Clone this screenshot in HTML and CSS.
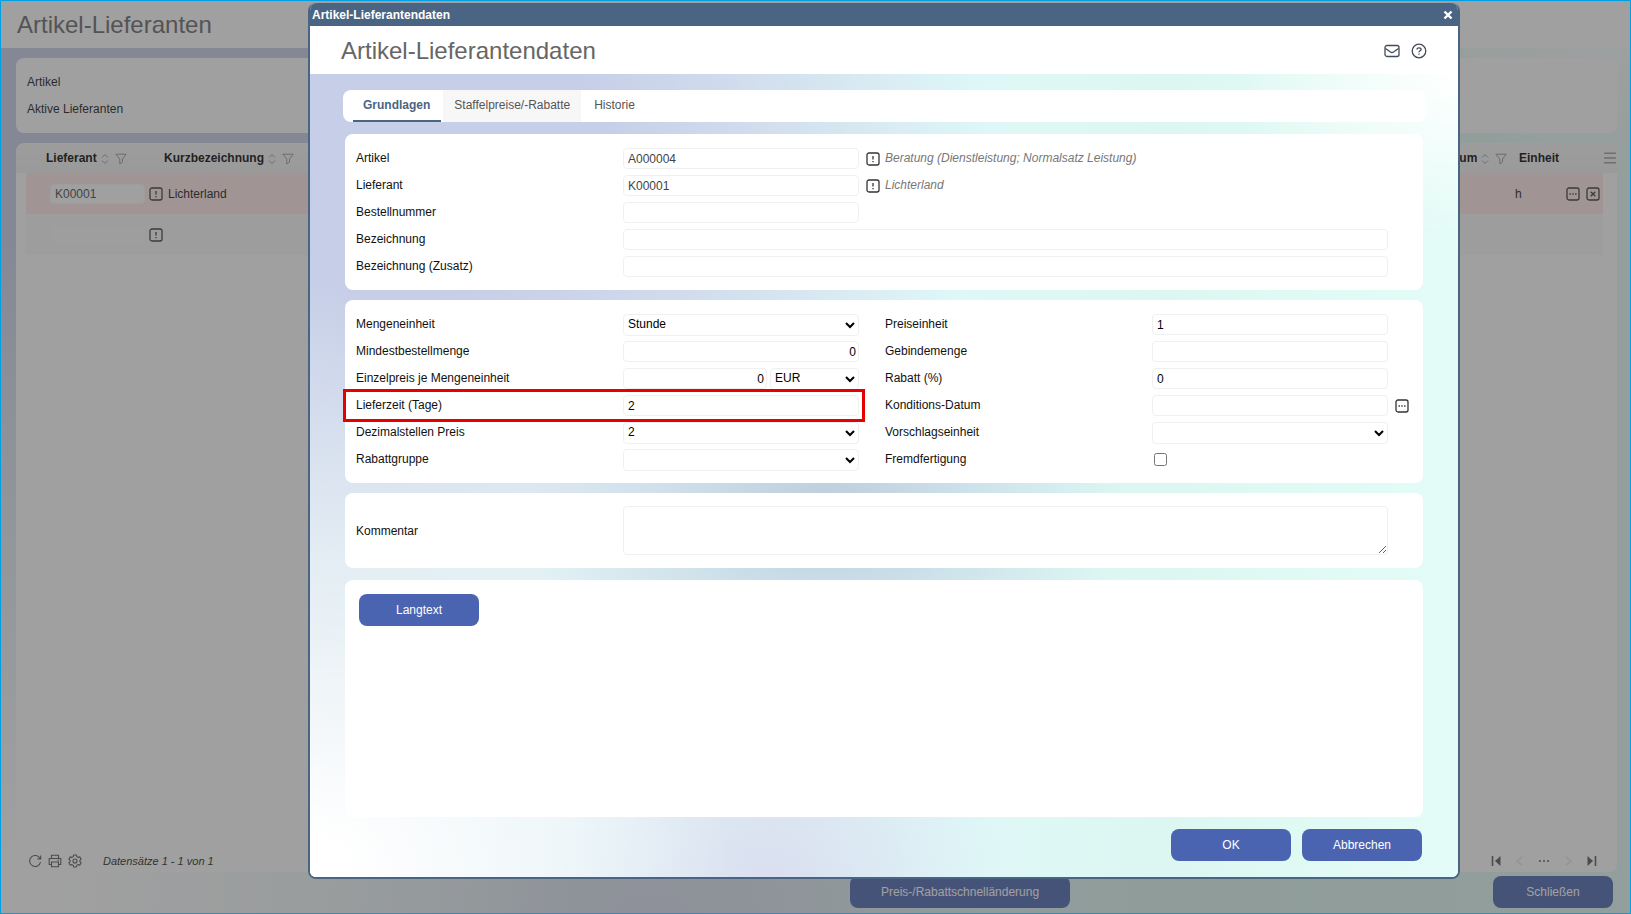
FILE: index.html
```html
<!DOCTYPE html>
<html lang="de">
<head>
    <meta charset="UTF-8">
    <meta name="viewport" content="width=device-width, initial-scale=1.0">
    <title>Artikel-Lieferanten</title>
    <link rel="stylesheet" href="styles.css">
</head>
<body>
    <!-- Icon set -->
    <svg class="sprite" aria-hidden="true">
        <symbol id="i-info" viewBox="0 0 14 14"><rect x="1" y="1" width="12" height="12" rx="2"/><path d="M7 4v3.5M7 9v1.2"/></symbol>
        <symbol id="i-dots" viewBox="0 0 14 14"><rect x="1" y="1" width="12" height="12" rx="2"/><path d="M3.5 7h1.4M6.3 7h1.4M9.1 7h1.4"/></symbol>
        <symbol id="i-del" viewBox="0 0 14 14"><rect x="1" y="1" width="12" height="12" rx="2"/><path d="M4.7 4.7l4.6 4.6M9.3 4.7L4.7 9.3"/></symbol>
        <symbol id="i-sort" viewBox="0 0 8 12"><path d="M1 4.5L4 1.5l3 3M1 7.5l3 3 3-3"/></symbol>
        <symbol id="i-filter" viewBox="0 0 12 12"><path d="M.8 1.2h10.4L7.5 6v3L4.800 11V6z"/></symbol>
        <symbol id="i-mail" viewBox="0 0 16 14"><rect x="1" y="1.5" width="14" height="11" rx="2"/><path d="M1.500 4.500L6.500 8q1.500 1 3 0l5-3.500"/></symbol>
        <symbol id="i-help" viewBox="0 0 16 16"><circle cx="8" cy="8" r="6.800"/><path d="M6 6.600C6 5.300 6.800 4.800 8 4.800s2.100.7 2.100 1.700C10.100 7.700 8 7.800 8 9.200M8 10.500v1.300"/></symbol>
        <symbol id="i-reload" viewBox="0 0 14 14"><path d="M12 4.500A5.500 5.500 0 1 0 12.500 8M12.700 1.500v3.500H9.200"/></symbol>
        <symbol id="i-print" viewBox="0 0 14 14"><path d="M3.500 4.500V1.200h7v3.300M3.500 10.500H1.200v-6h11.600v6h-2.300M3.500 8h7v4.800h-7zM9.500 6.300h1.500"/></symbol>
        <symbol id="i-gear" viewBox="0 0 14 14"><path d="M5.700 1h2.600l.5 1.700 1.300.7 1.700-.5 1.300 2.300L11.900 6.500v1l1.200 1.300-1.300 2.300-1.700-.5-1.300.7L8.300 13H5.700l-.5-1.700-1.300-.7-1.700.5L.9 8.800l1.200-1.300v-1L.9 5.200l1.300-2.300 1.700.5 1.300-.7z"/><circle cx="7" cy="7" r="2"/></symbol>
        <symbol id="i-menu" viewBox="0 0 12 12"><path d="M1 2h10M1 6h10M1 10h10"/></symbol>
        <symbol id="i-first" viewBox="0 0 10 10"><path d="M1.500 0v10"/><path class="solid" d="M9.500 0v10L4 5z"/></symbol>
        <symbol id="i-last" viewBox="0 0 10 10"><path d="M8.500 0v10"/><path class="solid" d="M.5 0v10L6 5z"/></symbol>
        <symbol id="i-prev" viewBox="0 0 10 10"><path d="M7 1L2 5l5 4"/></symbol>
        <symbol id="i-next" viewBox="0 0 10 10"><path d="M3 1l5 4-5 4"/></symbol>
        <symbol id="i-more" viewBox="0 0 10 10"><path d="M0 5h2M4 5h2M8 5h2"/></symbol>
    </svg>

    <div class="page backdrop">
        <header class="page-header"><h1>Artikel-Lieferanten</h1></header>
        <main class="page-main">
            <section class="box summary">
                <div>Artikel</div>
                <div>Aktive Lieferanten</div>
            </section>
            <section class="box list">
                <div class="list-top">
                    <table class="suppliers">
                        <colgroup>
                            <col class="c-supplier"><col class="c-name"><col><col class="c-date"><col class="c-unit"><col class="c-actions">
                        </colgroup>
                        <thead>
                            <tr>
                                <th>Lieferant<svg class="sort"><use href="#i-sort"/></svg><svg class="filter"><use href="#i-filter"/></svg></th>
                                <th>Kurzbezeichnung<svg class="sort"><use href="#i-sort"/></svg><svg class="filter"><use href="#i-filter"/></svg></th>
                                <th></th>
                                <th>Datum<svg class="sort"><use href="#i-sort"/></svg><svg class="filter"><use href="#i-filter"/></svg></th>
                                <th class="unit">Einheit</th>
                                <th></th>
                            </tr>
                        </thead>
                        <tbody>
                            <tr class="selected">
                                <td><div class="cell"><input type="text" value="K00001" aria-label="Lieferant"><button class="icon-btn" type="button" aria-label="Info"><svg><use href="#i-info"/></svg></button></div></td>
                                <td>Lichterland</td>
                                <td></td>
                                <td></td>
                                <td class="unit">h</td>
                                <td><div class="cell actions"><button class="icon-btn" type="button" aria-label="Details"><svg><use href="#i-dots"/></svg></button><button class="icon-btn" type="button" aria-label="Entfernen"><svg><use href="#i-del"/></svg></button></div></td>
                            </tr>
                            <tr class="new">
                                <td><div class="cell"><input type="text" aria-label="Neuer Lieferant"><button class="icon-btn" type="button" aria-label="Info"><svg><use href="#i-info"/></svg></button></div></td>
                                <td></td><td></td><td></td><td></td><td></td>
                            </tr>
                        </tbody>
                    </table>
                    <button class="icon-btn menu" type="button" aria-label="Spalten"><svg><use href="#i-menu"/></svg></button>
                </div>
                <div class="list-footer">
                    <button class="icon-btn" type="button" aria-label="Aktualisieren"><svg><use href="#i-reload"/></svg></button>
                    <button class="icon-btn" type="button" aria-label="Drucken"><svg><use href="#i-print"/></svg></button>
                    <button class="icon-btn" type="button" aria-label="Einstellungen"><svg><use href="#i-gear"/></svg></button>
                    <span class="count">Datensätze 1 - 1 von 1</span>
                    <div class="pager">
                        <button class="icon-btn" type="button" aria-label="Erste Seite"><svg><use href="#i-first"/></svg></button>
                        <button class="icon-btn" type="button" aria-label="Zurück" disabled><svg><use href="#i-prev"/></svg></button>
                        <button class="icon-btn" type="button" aria-label="Seiten"><svg><use href="#i-more"/></svg></button>
                        <button class="icon-btn" type="button" aria-label="Weiter" disabled><svg><use href="#i-next"/></svg></button>
                        <button class="icon-btn" type="button" aria-label="Letzte Seite"><svg><use href="#i-last"/></svg></button>
                    </div>
                </div>
            </section>
        </main>
        <footer class="page-footer">
            <button class="btn wide" type="button">Preis-/Rabattschnelländerung</button>
            <button class="btn" type="button">Schließen</button>
        </footer>
        <div class="overlay"></div>
    </div>

    <div class="dialog" role="dialog" aria-labelledby="dialog-title">
        <div class="dialog-bar">
            <span id="dialog-title">Artikel-Lieferantendaten</span>
            <button class="close" type="button" aria-label="Fenster schließen"><svg viewBox="0 0 10 10"><path d="M1.500 1.500l7 7M8.500 1.500l-7 7"/></svg></button>
        </div>
        <div class="dialog-header">
            <h2>Artikel-Lieferantendaten</h2>
            <button class="icon-btn large" type="button" aria-label="E-Mail"><svg><use href="#i-mail"/></svg></button>
            <button class="icon-btn large" type="button" aria-label="Hilfe"><svg><use href="#i-help"/></svg></button>
        </div>
        <form class="dialog-body backdrop">
            <nav class="tabs">
                <a class="tab active" href="#">Grundlagen</a>
                <a class="tab shaded" href="#">Staffelpreise/-Rabatte</a>
                <a class="tab" href="#">Historie</a>
            </nav>
            <div class="panels">
                <section class="box panel">
                    <div class="fields">
                        <div class="field"><label for="artikel">Artikel</label><input id="artikel" class="readonly" type="text" value="A000004"><span class="slot"><button class="icon-btn" type="button" aria-label="Info Artikel"><svg><use href="#i-info"/></svg></button></span></div>
                        <div class="hint">Beratung (Dienstleistung; Normalsatz Leistung)</div>
                        <div class="field"><label for="lieferant">Lieferant</label><input id="lieferant" class="readonly" type="text" value="K00001"><span class="slot"><button class="icon-btn" type="button" aria-label="Info Lieferant"><svg><use href="#i-info"/></svg></button></span></div>
                        <div class="hint">Lichterland</div>
                        <div class="field"><label for="bestellnummer">Bestellnummer</label><input id="bestellnummer" type="text"><span class="slot"></span></div>
                        <div></div>
                        <div class="field full"><label for="bezeichnung">Bezeichnung</label><input id="bezeichnung" type="text"><span class="slot"></span></div>
                        <div class="field full"><label for="zusatz">Bezeichnung (Zusatz)</label><input id="zusatz" type="text"><span class="slot"></span></div>
                    </div>
                </section>

                <section class="box panel">
                    <div class="fields">
                        <div class="field"><label for="einheit">Mengeneinheit</label><select id="einheit"><option>Stunde</option></select><span class="slot"></span></div>
                        <div class="field"><label for="preiseinheit">Preiseinheit</label><input id="preiseinheit" type="text" value="1"><span class="slot"></span></div>
                        <div class="field"><label for="mindest">Mindestbestellmenge</label><input id="mindest" class="number" type="text" value="0"><span class="slot"></span></div>
                        <div class="field"><label for="gebinde">Gebindemenge</label><input id="gebinde" type="text"><span class="slot"></span></div>
                        <div class="field"><label for="preis">Einzelpreis je Mengeneinheit</label><input id="preis" class="number" type="text" value="0"><select class="currency" aria-label="Währung"><option>EUR</option></select><span class="slot"></span></div>
                        <div class="field"><label for="rabatt">Rabatt (%)</label><input id="rabatt" type="text" value="0"><span class="slot"></span></div>
                        <div class="field marked"><label for="lieferzeit">Lieferzeit (Tage)</label><input id="lieferzeit" type="text" value="2"><span class="slot"></span></div>
                        <div class="field"><label for="datum">Konditions-Datum</label><input id="datum" type="text"><span class="slot"><button class="icon-btn" type="button" aria-label="Datum wählen"><svg><use href="#i-dots"/></svg></button></span></div>
                        <div class="field"><label for="dezimal">Dezimalstellen Preis</label><select id="dezimal"><option>2</option></select><span class="slot"></span></div>
                        <div class="field"><label for="vorschlag">Vorschlagseinheit</label><select id="vorschlag"><option></option></select><span class="slot"></span></div>
                        <div class="field"><label for="gruppe">Rabattgruppe</label><select id="gruppe"><option></option></select><span class="slot"></span></div>
                        <div class="field"><label for="fremd">Fremdfertigung</label><input id="fremd" type="checkbox"></div>
                    </div>
                </section>

                <section class="box panel comment">
                    <div class="field"><label for="kommentar">Kommentar</label><textarea id="kommentar"></textarea><span class="slot"></span></div>
                </section>

                <section class="box panel longtext">
                    <button class="btn" type="button">Langtext</button>
                </section>
            </div>
            <div class="dialog-actions">
                <button class="btn" type="submit">OK</button>
                <button class="btn" type="button">Abbrechen</button>
            </div>
        </form>
    </div>
</body>
</html>
```

FILE: styles.css
```css
* {
    box-sizing: border-box;
}
body {
    margin: 0;
    font-family: "Liberation Sans", Arial, sans-serif;
    font-size: 12px;
    line-height: 16px;
    color: #111;
}
h1, h2 {
    margin: 0;
    font-size: 24px;
    line-height: 32px;
    font-weight: normal;
    color: #666;
}
input, select, textarea, button {
    font: inherit;
    color: #000;
}
svg {
    fill: none;
    stroke: currentColor;
}
.solid {
    fill: currentColor;
    stroke: none;
}
.sprite {
    display: none;
}
.backdrop {
    background:
        radial-gradient(ellipse at 100% 0%, #ffffff 0%, rgba(255, 255, 255, 0) 14%),
        radial-gradient(ellipse at 0% 98%, #ffffff 2%, rgba(255, 255, 255, 0) 26%),
        radial-gradient(ellipse at 40% 102%, #dae0f0 2%, rgba(218, 224, 240, 0) 24%),
        radial-gradient(ellipse at 8% 10%, #c7cfe8 14%, rgba(199, 207, 232, 0) 40%),
        radial-gradient(ellipse at 45% 54%, #bccddd 0%, rgba(192, 211, 224, 0) 34%),
        linear-gradient(to right, #e4edf3 0%, #dff8f8 55%, #dcf7f1 75%, #e4fcf7 100%);
}
.box {
    background: #fff;
    border-radius: 8px;
}
.btn {
    width: 120px;
    height: 32px;
    padding: 0;
    border: none;
    border-radius: 8px;
    background: #4b64b1;
    color: #fff;
    cursor: pointer;
}
.btn.wide {
    width: 220px;
}
.icon-btn {
    display: flex;
    padding: 0;
    border: none;
    background: none;
    color: #333;
    cursor: pointer;
}
.icon-btn svg {
    width: 14px;
    height: 14px;
    stroke-width: 1.3;
}

/* Supplier list */
.page {
    position: relative;
    display: flex;
    flex-direction: column;
    height: 100vh;
    border: 1px solid #009fe3;
}
.page-header {
    padding: 8px 16px 7px;
    background: #fff;
}
.page-main {
    flex: 1;
    display: flex;
    flex-direction: column;
    gap: 10px;
    padding: 10px 13px 0 15px;
}
.summary {
    padding: 11px 11px 10px;
    line-height: 27px;
}
.list {
    flex: 1;
    display: flex;
    flex-direction: column;
    justify-content: space-between;
    overflow: hidden;
    background: linear-gradient(#f8f8f8 0, #f2f2f2 30px, #fff 30px);
}
.list-top {
    display: flex;
    padding-left: 10px;
}
.suppliers {
    flex: 1;
    table-layout: fixed;
    width: 100%;
    border-collapse: collapse;
}
.c-supplier { width: 138px; }
.c-name { width: 150px; }
.c-date { width: 75px; }
.c-unit { width: 46px; }
.c-actions { width: 42px; }
.suppliers th {
    height: 30px;
    padding: 0;
    text-align: left;
    white-space: nowrap;
    color: #000;
}
.suppliers th:first-child {
    padding-left: 20px;
}
.suppliers td {
    height: 41px;
    padding: 0 0 0 4px;
}
.suppliers td:first-child {
    padding-left: 24px;
}
.suppliers th.unit {
    padding-left: 4px;
}
.suppliers td.unit,
.suppliers td:last-child {
    padding-left: 0;
}
.sort, .filter {
    height: 12px;
    margin-left: 4px;
    vertical-align: -3px;
    color: #999;
}
.sort {
    width: 8px;
}
.filter {
    width: 12px;
    margin-left: 6px;
}
.selected {
    background: #ffe9e6;
}
.new {
    background: #f8f8fb;
}
.cell {
    display: flex;
    align-items: center;
    gap: 4px;
}
.cell input {
    width: 95px;
    height: 20px;
    padding: 0 4px;
    border: 1px solid #f8f8f8;
    border-radius: 4px;
    background: #fff;
    color: #444;
}
.new input {
    background: #fbfbfd;
}
.actions {
    gap: 6px;
    padding-left: 5px;
}
.menu {
    align-self: flex-start;
    padding-top: 8px;
    color: #999;
}
.list-footer {
    display: flex;
    align-items: center;
    gap: 6px;
    padding: 0 20px 3px 12px;
}
.list-footer .icon-btn {
    color: #555;
}
.list-footer svg {
    stroke-width: 1.1;
}
.count {
    margin-left: 15px;
    font-size: 11px;
    font-style: italic;
    color: #222;
}
.pager {
    display: flex;
    gap: 14px;
    margin-left: auto;
}
.pager svg {
    width: 10px;
    height: 10px;
    stroke-width: 1.6;
}
.list-footer .icon-btn:disabled {
    color: #e4e4e4;
}
.page-footer {
    display: flex;
    justify-content: space-between;
    margin-left: 52%;
    padding: 4px 17px 5px 2px;
}
.overlay {
    position: absolute;
    inset: 0;
    background: rgba(66, 66, 66, 0.5);
}

/* Dialog */
.dialog {
    position: absolute;
    top: 3px;
    right: 171px;
    bottom: 35px;
    left: 308px;
    display: flex;
    flex-direction: column;
    overflow: hidden;
    border: 2px solid #4a6583;
    border-top: none;
    border-radius: 8px;
    background: #fff;
}
.dialog-bar {
    display: flex;
    align-items: center;
    justify-content: space-between;
    height: 23px;
    padding: 0 5px 0 2px;
    background: #4a6583;
    color: #fff;
    font-weight: bold;
}
.close {
    display: flex;
    padding: 1px 0 0;
    border: none;
    background: none;
    color: #fff;
}
.close svg {
    width: 10px;
    height: 10px;
    stroke-width: 2.4;
}
.dialog-header {
    display: flex;
    align-items: center;
    gap: 11px;
    height: 48px;
    padding: 2px 31px 0;
}
.dialog-header h2 {
    flex: 1;
}
.large {
    color: #434a5c;
}
.large svg {
    width: 16px;
    height: 16px;
}
.dialog-body {
    flex: 1;
    display: flex;
    flex-direction: column;
    padding: 16px 32px 16px 33px;
}
.tabs {
    display: flex;
    height: 32px;
    padding-left: 10px;
    border-radius: 8px;
    background: #fff;
}
.tab {
    padding: 7px 13px;
    color: #555;
    text-decoration: none;
}
.tab.active {
    margin-right: 2px;
    padding: 7px 11px 7px 10px;
    border-bottom: 2px solid #4a6583;
    color: #4a6583;
    font-weight: bold;
}
.tab.shaded {
    padding: 7px 11px;
    background: #f7f7f7;
}
.panels {
    flex: 1;
    display: flex;
    flex-direction: column;
    gap: 10px;
    padding: 12px 3px 12px 2px;
}
.panel {
    padding: 11px 9px 10px 11px;
}
.fields {
    display: grid;
    grid-template-columns: repeat(2, minmax(0, 1fr));
    grid-auto-rows: 27px;
    align-items: center;
}
.field {
    position: relative;
    display: flex;
    align-items: center;
}
.full {
    grid-column: span 2;
}
.field label {
    flex: 0 0 267px;
}
.fields label,
.hint {
    padding-bottom: 2px;
}
.field input,
.field select,
.field textarea {
    flex: 1;
    min-width: 0;
    height: 21px;
    padding: 0 4px;
    border: 1px solid #f0f0f0;
    border-radius: 4px;
    background: #fff;
}
.field select {
    height: 22px;
    padding: 0 0 2px;
}
.field .readonly {
    color: #444;
}
.field .number {
    padding: 0 2px;
    text-align: right;
}
.field .currency {
    flex: 0 0 89px;
    margin-left: 3px;
}
.field input[type="checkbox"] {
    flex: none;
    width: 13px;
    height: 13px;
    margin: 0 2px;
}
.field textarea {
    height: 49px;
    resize: vertical;
}
.slot {
    flex: 0 0 26px;
    padding-left: 7px;
}
.hint {
    font-style: italic;
    color: #777;
}
.marked::after {
    content: "";
    position: absolute;
    inset: -6px 20px -6px -13px;
    border: 3px solid #e60000;
    pointer-events: none;
}
.comment {
    padding-top: 13px;
    padding-bottom: 13px;
}
.longtext {
    flex: 1;
    margin-top: 2px;
    padding: 14px;
}
.dialog-actions {
    display: flex;
    justify-content: flex-end;
    gap: 11px;
    padding-right: 4px;
}
```
